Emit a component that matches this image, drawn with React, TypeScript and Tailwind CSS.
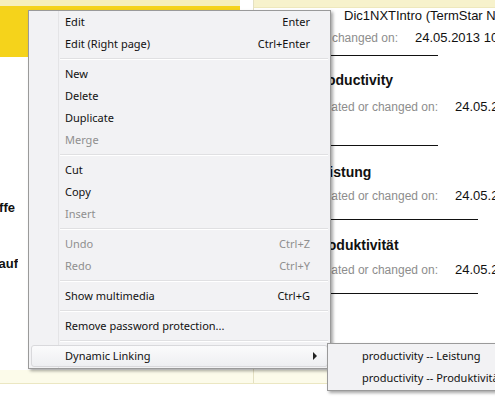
import React from "react";

type Item = { label: string; shortcut?: string; disabled?: boolean; sub?: boolean; hot?: boolean };

const groups: Item[][] = [
  [
    { label: "Edit", shortcut: "Enter" },
    { label: "Edit (Right page)", shortcut: "Ctrl+Enter" },
  ],
  [
    { label: "New" },
    { label: "Delete" },
    { label: "Duplicate" },
    { label: "Merge", disabled: true },
  ],
  [{ label: "Cut" }, { label: "Copy" }, { label: "Insert", disabled: true }],
  [
    { label: "Undo", shortcut: "Ctrl+Z", disabled: true },
    { label: "Redo", shortcut: "Ctrl+Y", disabled: true },
  ],
  [{ label: "Show multimedia", shortcut: "Ctrl+G" }],
  [{ label: "Remove password protection..." }],
  [{ label: "Dynamic Linking", sub: true, hot: true }],
];

const menuFont = { fontFamily: '"Noto Sans", "Open Sans", sans-serif' };

const Separator = () => (
  <div className="h-[8px] flex flex-col justify-center ml-[31px] mr-[2px]">
    <div className="h-px bg-[#e0e0e2]" />
    <div className="h-px bg-white" />
  </div>
);

const MenuRow = ({ item }: { item: Item }) => (
  <div
    className={
      "relative h-[22px] flex items-center pl-[33px] pr-[17px] mx-[2px] rounded-[3px] border " +
      (item.hot
        ? "border-[#d9d9dc] bg-gradient-to-b from-[#fbfbfc] to-[#eeeff2]"
        : "border-transparent")
    }
  >
    <span className={"flex-1 whitespace-nowrap " + (item.disabled ? "text-[#8f8f8f]" : "text-[#111]")}>
      {item.label}
    </span>
    {item.shortcut && (
      <span className={"whitespace-nowrap " + (item.disabled ? "text-[#8f8f8f]" : "text-[#111]")}>
        {item.shortcut}
      </span>
    )}
    {item.sub && (
      <svg width="5" height="8" viewBox="0 0 5 8" className="mr-[-8px]">
        <path d="M0 0 L4 4 L0 8 Z" fill="#222" />
      </svg>
    )}
  </div>
);

const Entry = ({ title, lineW, top, gapLabel, gapLine }: { title: string; lineW: string; top: string; gapLabel: string; gapLine: string }) => (
  <div className={top}>
    <div className="pl-[59px] text-[14px] leading-[18px] font-bold text-[#111] whitespace-nowrap">{title}</div>
    <div className={"flex items-center leading-[16px] whitespace-nowrap " + gapLabel}>
      <span className="w-[184px] shrink-0 text-right text-[12px] text-[#8d8d8d]">Created or changed on:</span>
      <span className="ml-[17px] text-[13px] text-[#111]">24.05.2013 10:12</span>
    </div>
    <div className={"ml-[59px] h-px bg-[#111] " + gapLine + " " + lineW} />
  </div>
);

export default function App() {
  return (
    <div
      className="relative w-[495px] h-[399px] overflow-hidden bg-white"
      style={{ fontFamily: '"Liberation Sans", Arial, sans-serif' }}
    >
      {/* two pages */}
      <div className="flex h-[384px] border-b border-[#ebe7c2]">
        <div className="w-[254px] shrink-0 flex flex-col border-r border-[#e4e0c2]">
          <div className="mr-[13px]">
            <div className="h-[6px] bg-[#f6efbb]" />
            <div className="h-[51px] bg-[#f5d31b]" />
          </div>
          <div className="flex-1 text-[13px] font-bold text-[#111] leading-[16px]">
            <div className="mt-[143px] w-[15px] flex justify-end overflow-hidden whitespace-nowrap">Begriffe</div>
            <div className="mt-[40px] w-[18px] flex justify-end overflow-hidden whitespace-nowrap">Verlauf</div>
          </div>
          <div className="h-[13px] bg-[#fcfbea]" />
        </div>

        <div className="flex-1 min-w-0 overflow-hidden flex flex-col">
          <div className="h-[8px] bg-[#f7f2cc] border-b border-[#eee8bd]" />
          <div className="flex-1">
            <div className="pl-[90px] text-[13px] leading-[16px] text-[#111] whitespace-nowrap">
              Dic1NXTIntro (TermStar NXT)
            </div>
            <div className="mt-[6px] flex items-center leading-[16px] whitespace-nowrap">
              <span className="w-[144px] shrink-0 text-right text-[12px] text-[#8d8d8d]">Created or changed on:</span>
              <span className="ml-[17px] text-[13px] text-[#111]">24.05.2013 10:12</span>
            </div>
            <div className="mt-[9px] ml-[59px] w-[125px] h-px bg-[#111]" />
            <Entry title="productivity" lineW="w-[125px]" top="mt-[15px]" gapLabel="mt-[10px]" gapLine="mt-[30px]" />
            <Entry title="Leistung" lineW="w-[165px]" top="mt-[17px]" gapLabel="mt-[7px]" gapLine="mt-[15px]" />
            <Entry title="Produktivität" lineW="w-[165px]" top="mt-[16px]" gapLabel="mt-[8px]" gapLine="mt-[15px]" />
          </div>
          <div className="h-[13px] bg-[#fcfbea]" />
        </div>
      </div>

      {/* context menu */}
      <div
        className="absolute left-[28px] top-[10px] w-[303px] bg-[#f2f2f4] border border-[#9a9a9a] pb-px text-[11px] shadow-[2px_2px_3px_rgba(0,0,0,0.35)]"
        style={menuFont}
      >
        <div className="absolute left-[29px] top-0 bottom-0 w-px bg-[#e4e4e6]" />
        {groups.map((g, i) => (
          <div key={i}>
            {i > 0 && <Separator />}
            {g.map((it) => (
              <MenuRow key={it.label} item={it} />
            ))}
          </div>
        ))}
      </div>

      {/* submenu */}
      <div
        className="absolute left-[327px] top-[343px] w-[190px] bg-[#f2f2f4] border border-[#9a9a9a] py-px text-[11px] text-[#111] shadow-[2px_2px_3px_rgba(0,0,0,0.35)]"
        style={menuFont}
      >
        <div className="h-[22px] flex items-center pl-[34px] whitespace-nowrap">productivity -- Leistung</div>
        <div className="h-[22px] flex items-center pl-[34px] whitespace-nowrap">productivity -- Produktivität</div>
      </div>
    </div>
  );
}
